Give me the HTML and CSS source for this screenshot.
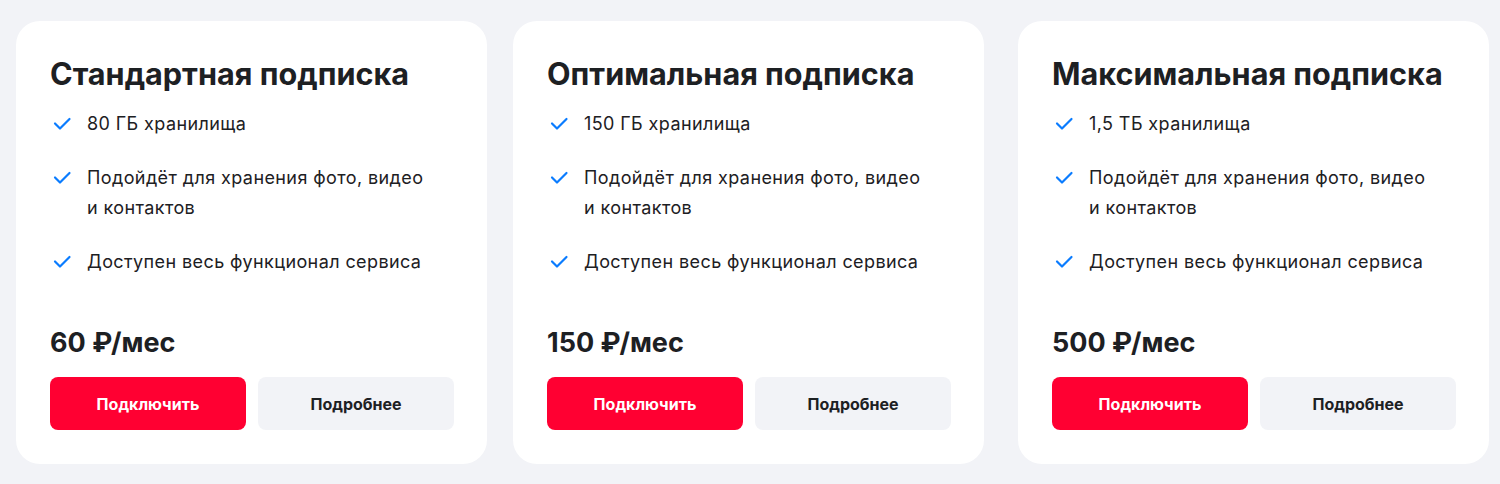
FILE: index.html
```html
<!DOCTYPE html>
<html lang="ru">
<head>
<meta charset="utf-8">
<link rel="stylesheet" href="styles.css">
</head>
<body>
<div class="plans">
  <div class="card">
    <h2 class="title">Стандартная подписка</h2>
    <ul class="features">
      <li><svg class="check" viewBox="0 0 24 24"><path d="M5 11.5l5 5L19.5 7"/></svg><span>80 ГБ хранилища</span></li>
      <li><svg class="check" viewBox="0 0 24 24"><path d="M5 11.5l5 5L19.5 7"/></svg><span>Подойдёт для хранения фото, видео<br>и контактов</span></li>
      <li><svg class="check" viewBox="0 0 24 24"><path d="M5 11.5l5 5L19.5 7"/></svg><span>Доступен весь функционал сервиса</span></li>
    </ul>
    <div class="price">60 ₽/мес</div>
    <div class="actions">
      <button class="btn btn-primary">Подключить</button>
      <button class="btn btn-secondary">Подробнее</button>
    </div>
  </div>
  <div class="card">
    <h2 class="title">Оптимальная подписка</h2>
    <ul class="features">
      <li><svg class="check" viewBox="0 0 24 24"><path d="M5 11.5l5 5L19.5 7"/></svg><span>150 ГБ хранилища</span></li>
      <li><svg class="check" viewBox="0 0 24 24"><path d="M5 11.5l5 5L19.5 7"/></svg><span>Подойдёт для хранения фото, видео<br>и контактов</span></li>
      <li><svg class="check" viewBox="0 0 24 24"><path d="M5 11.5l5 5L19.5 7"/></svg><span>Доступен весь функционал сервиса</span></li>
    </ul>
    <div class="price">150 ₽/мес</div>
    <div class="actions">
      <button class="btn btn-primary">Подключить</button>
      <button class="btn btn-secondary">Подробнее</button>
    </div>
  </div>
  <div class="card card-last">
    <h2 class="title">Максимальная подписка</h2>
    <ul class="features">
      <li><svg class="check" viewBox="0 0 24 24"><path d="M5 11.5l5 5L19.5 7"/></svg><span>1,5 ТБ хранилища</span></li>
      <li><svg class="check" viewBox="0 0 24 24"><path d="M5 11.5l5 5L19.5 7"/></svg><span>Подойдёт для хранения фото, видео<br>и контактов</span></li>
      <li><svg class="check" viewBox="0 0 24 24"><path d="M5 11.5l5 5L19.5 7"/></svg><span>Доступен весь функционал сервиса</span></li>
    </ul>
    <div class="price">500 ₽/мес</div>
    <div class="actions">
      <button class="btn btn-primary">Подключить</button>
      <button class="btn btn-secondary">Подробнее</button>
    </div>
  </div>
</div>
</body>
</html>
```

FILE: styles.css
```css
* { box-sizing: border-box; }
html, body {
  margin: 0;
  padding: 0;
  background: #f2f3f7;
  font-family: Inter, "Noto Sans", sans-serif;
  color: #1d2023;
}
.plans {
  display: flex;
  gap: 26px;
  padding: 21px 0 0 16px;
}
.card {
  width: 471px;
  background: #ffffff;
  border-radius: 24px;
  padding: 35px 32px 34px 34px;
}
.card-last {
  margin-left: 8px;
}
.title {
  margin: 0;
  font-size: 30.6px;
  line-height: 36px;
  font-weight: 700;
  letter-spacing: 0;
}
.features {
  list-style: none;
  margin: 17px 0 0;
  padding: 0;
  display: flex;
  flex-direction: column;
  gap: 24px;
}
.features li {
  display: flex;
  align-items: flex-start;
  gap: 13px;
  font-size: 18px;
  line-height: 30px;
  letter-spacing: 0.4px;
}
.check {
  width: 24px;
  height: 24px;
  flex: none;
  margin-top: 3px;
  fill: none;
  stroke: #0a7cff;
  stroke-width: 2.2;
  stroke-linecap: round;
  stroke-linejoin: round;
}
.price {
  margin-top: 50px;
  font-size: 27px;
  line-height: 32px;
  font-weight: 700;
}
.actions {
  display: flex;
  gap: 12px;
  margin-top: 18px;
}
.btn {
  width: 196px;
  height: 53px;
  border: none;
  border-radius: 8px;
  font-family: Inter, "Noto Sans", sans-serif;
  font-size: 16px;
  font-weight: 700;
  cursor: pointer;
}
.btn-primary {
  background: #ff0032;
  color: #ffffff;
}
.btn-secondary {
  background: #f2f3f7;
  color: #1d2023;
}
```
